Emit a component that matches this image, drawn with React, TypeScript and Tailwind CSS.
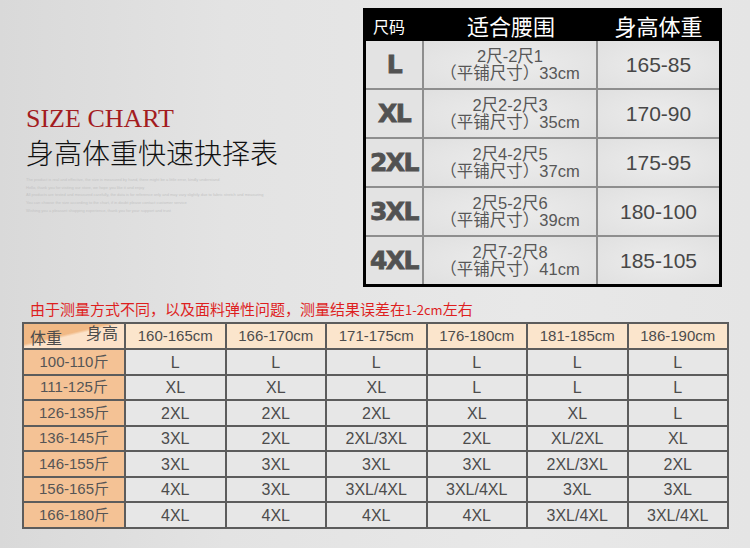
const sans = "font-['Liberation_Sans','Noto_Sans_CJK_SC',sans-serif]";

const sizeRows = [
  { size: "L", waist: "2尺-2尺1", flat: "33cm", hw: "165-85" },
  { size: "XL", waist: "2尺2-2尺3", flat: "35cm", hw: "170-90" },
  { size: "2XL", waist: "2尺4-2尺5", flat: "37cm", hw: "175-95" },
  { size: "3XL", waist: "2尺5-2尺6", flat: "39cm", hw: "180-100" },
  { size: "4XL", waist: "2尺7-2尺8", flat: "41cm", hw: "185-105" },
];

const heights = ["160-165cm", "166-170cm", "171-175cm", "176-180cm", "181-185cm", "186-190cm"];

const weightRows: { w: string; cells: string[] }[] = [
  { w: "100-110斤", cells: ["L", "L", "L", "L", "L", "L"] },
  { w: "111-125斤", cells: ["XL", "XL", "XL", "L", "L", "L"] },
  { w: "126-135斤", cells: ["2XL", "2XL", "2XL", "XL", "XL", "L"] },
  { w: "136-145斤", cells: ["3XL", "2XL", "2XL/3XL", "2XL", "XL/2XL", "XL"] },
  { w: "146-155斤", cells: ["3XL", "3XL", "3XL", "3XL", "2XL/3XL", "2XL"] },
  { w: "156-165斤", cells: ["4XL", "3XL", "3XL/4XL", "3XL/4XL", "3XL", "3XL"] },
  { w: "166-180斤", cells: ["4XL", "4XL", "4XL", "4XL", "3XL/4XL", "3XL/4XL"] },
];

// faint filler copy under the title
const fillerLines = [
  "The product is real and effective, the size is measured by hand, there might be a little error, kindly understand",
  "Hello, thank you for visiting our store, we hope you like it and enjoy",
  "All products are tested and measured carefully, the data is for reference only and may vary slightly due to fabric stretch and measuring",
  "You can choose the size according to the chart, if in doubt please contact customer service",
  "Wishing you a pleasant shopping experience, thank you for your support and trust",
];

function SizeTable() {
  return (
    <div className={`w-[359px] border-[3px] border-black bg-black ${sans}`}>
      <div className="grid h-[30px] grid-cols-[58px_174px_1fr] items-center text-white">
        <div className="pl-[7px] text-[16px]">尺码</div>
        <div className="text-center text-[22px]">适合腰围</div>
        <div className="text-center text-[22px]">身高体重</div>
      </div>
      <div className="grid grid-cols-[56px_172px_1fr] gap-[2px] bg-[#8e8e8e]">
        {sizeRows.map((r) => (
          <div key={r.size} className="contents">
            <div className="flex h-[47px] items-center justify-center bg-[#e3e3e3] font-['DejaVu_Sans',sans-serif] text-[25px] font-bold tracking-[-1.5px] text-[#525252] [-webkit-text-stroke:0.8px_#525252]">
              {r.size}
            </div>
            <div className="flex h-[47px] flex-col items-center justify-center bg-[radial-gradient(ellipse_at_center,#ececec,#e0e0e0)] text-[16.5px] leading-[17px] text-[#575757]">
              <span>{r.waist}</span>
              <span>（平铺尺寸）{r.flat}</span>
            </div>
            <div className="flex h-[47px] items-center justify-center bg-[radial-gradient(ellipse_at_center,#ececec,#e0e0e0)] text-[21px] text-[#474747]">
              {r.hw}
            </div>
          </div>
        ))}
      </div>
    </div>
  );
}

function FitTable() {
  return (
    <div className={`grid w-[707px] grid-cols-[100px_repeat(6,1fr)] grid-rows-[24px_repeat(7,23.5px)] gap-[2px] border-2 border-[#5c5c5c] bg-[#5c5c5c] text-[16px] text-[#4c4c4c] ${sans}`}>
      <div className="relative bg-[linear-gradient(to_bottom_right,#f1b985_42%,#fce2c9_48%)] text-[16px]">
        <span className="absolute right-[6px] top-[-2px]">身高</span>
        <span className="absolute bottom-[-3px] left-[6px]">体重</span>
      </div>
      {heights.map((h) => (
        <div key={h} className="flex items-center justify-center bg-[#fbe5cc] text-[15px]">
          {h}
        </div>
      ))}
      {weightRows.map((row) => (
        <div key={row.w} className="contents">
          <div className="flex items-center justify-center bg-[#f4c295] text-[15px] text-[#555]">{row.w}</div>
          {row.cells.map((c, i) => (
            <div key={i} className="flex items-center justify-center bg-[#e7e7e7] pt-[2px]">
              {c}
            </div>
          ))}
        </div>
      ))}
    </div>
  );
}

export default function App() {
  return (
    <div className="h-[558px] w-[750px] overflow-hidden bg-white">
      <div className="h-[548px] bg-[linear-gradient(to_right,#d9d9d9,#e3e3e3_30%,#e8e8e8_70%,#e5e5e5)]">
        <div className="flex">
          {/* title block */}
          <div className="w-[363px] pl-[26px] pt-[104px]">
            <div className="font-['Liberation_Serif',serif] text-[26px] leading-[30px] text-[#a31c1f]">SIZE CHART</div>
            <div className="mt-[1px] font-['Noto_Sans_CJK_SC',sans-serif] text-[28px] leading-[34px] font-light text-[#111]">
              身高体重快速抉择表
            </div>
            <div className="mt-[7px] font-['Liberation_Sans',sans-serif] text-[4px] leading-[7.7px] text-[#c4c4c4]">
              {fillerLines.map((l, i) => (
                <div key={i} className="whitespace-nowrap">
                  {l}
                </div>
              ))}
            </div>
          </div>
          <div className="pt-[8px]">
            <SizeTable />
          </div>
        </div>

        <div className="pl-[22px]">
          <div className="ml-[8px] mt-[13px] font-['Noto_Sans_CJK_SC',sans-serif] text-[15px] leading-[18px] text-[#de1f1f]">
            由于测量方式不同，以及面料弹性问题，测量结果误差在<span className="text-[13px]">1-2cm</span>左右
          </div>
          <div className="mt-[3px]">
            <FitTable />
          </div>
        </div>
      </div>
    </div>
  );
}
